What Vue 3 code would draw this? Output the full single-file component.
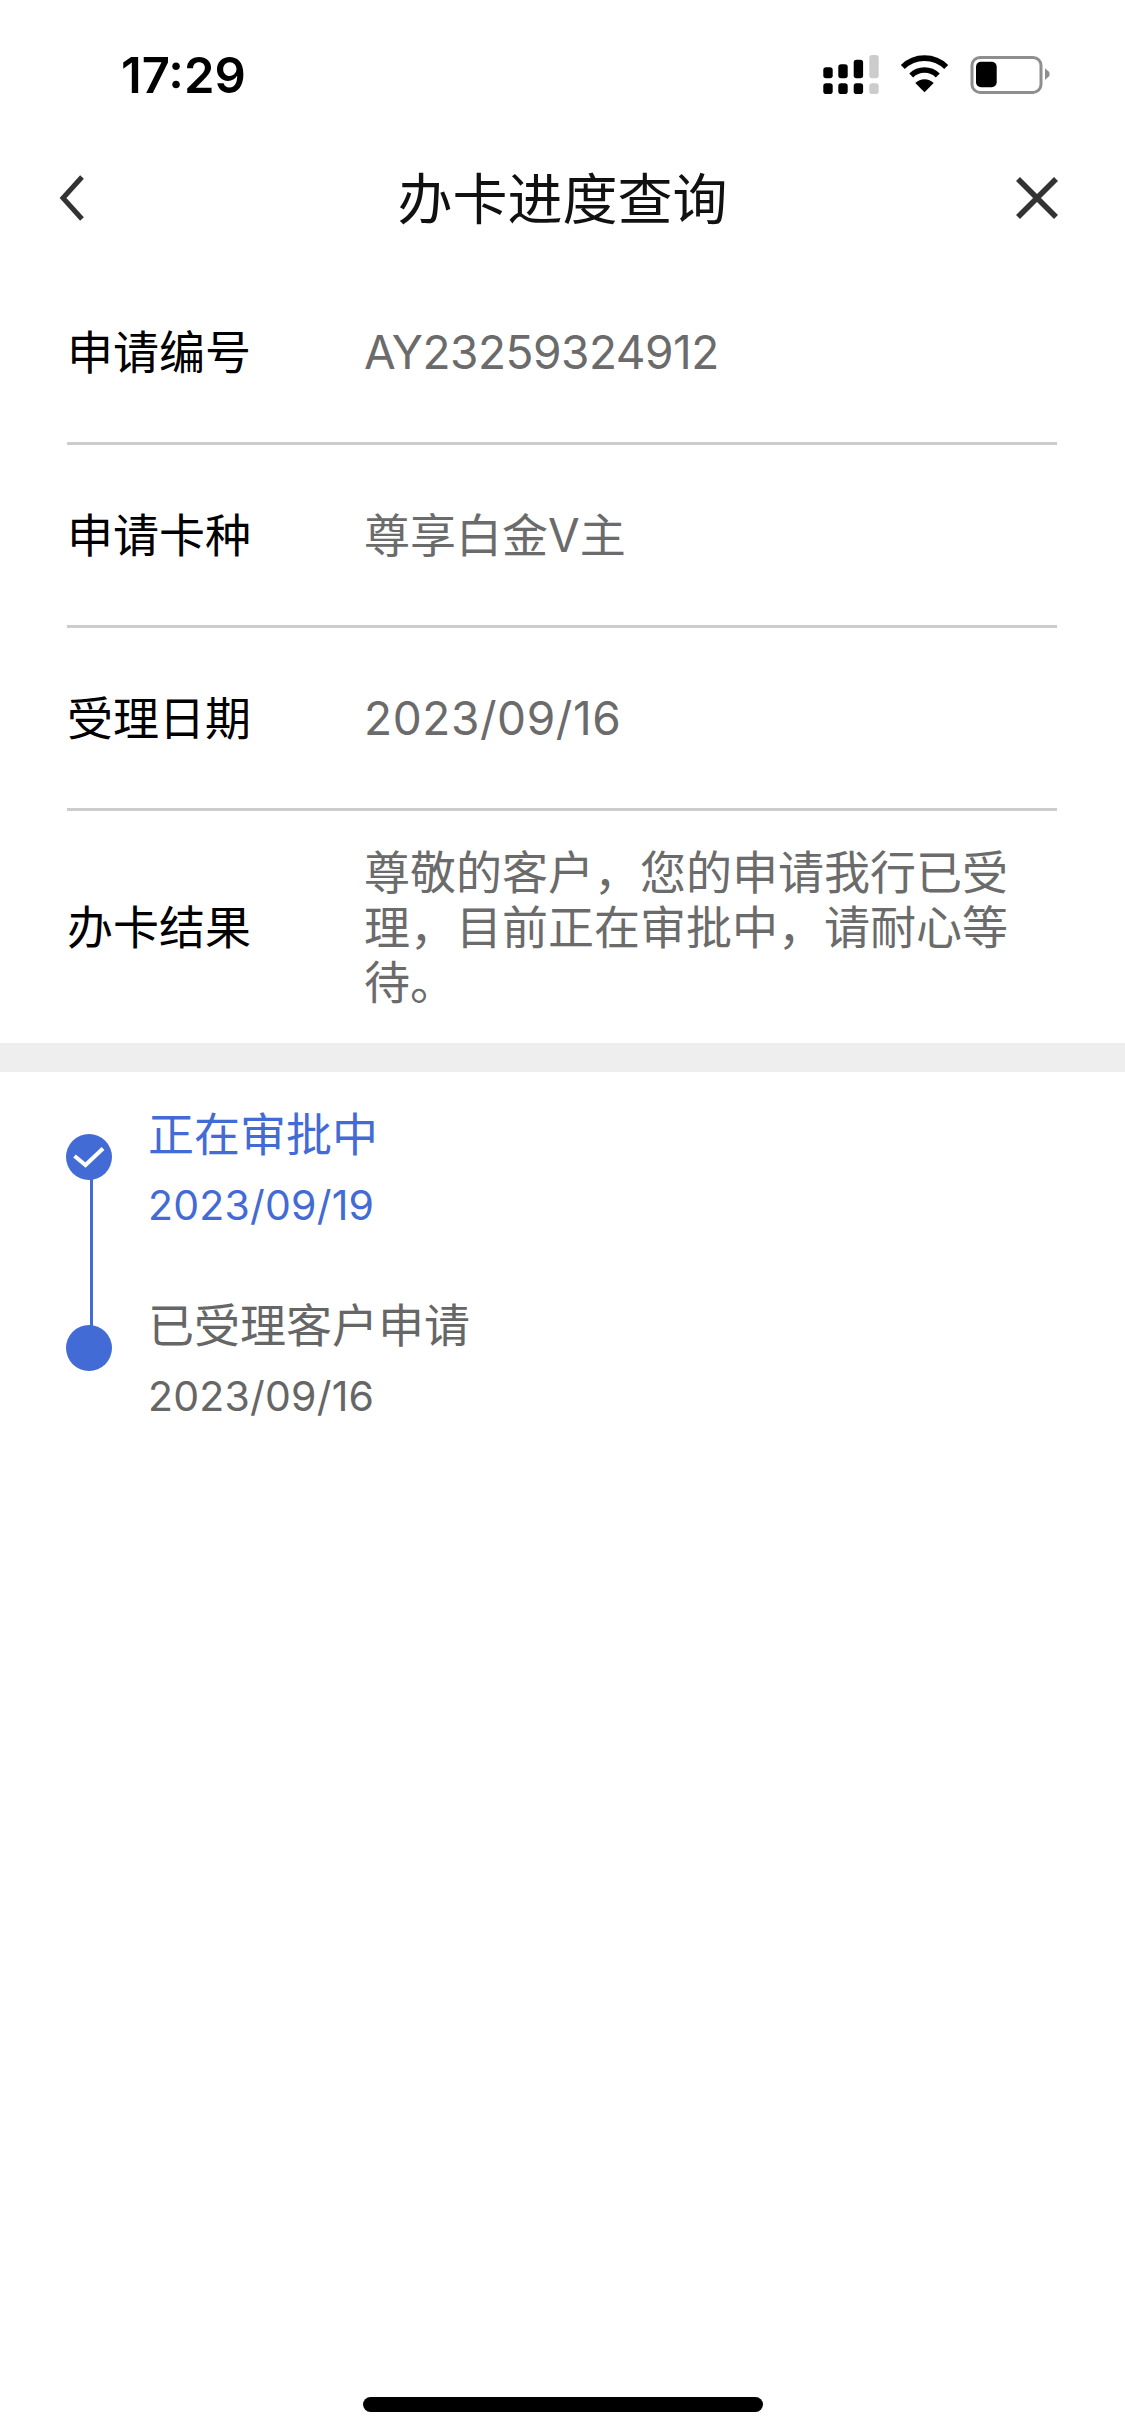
<script setup>
const rows = [
  { label: '申请编号', value: 'AY23259324912', cls: 'tight' },
  { label: '申请卡种', value: '尊享白金V主', cls: '' },
  { label: '受理日期', value: '2023/09/16', cls: 'wide' },
  { label: '办卡结果', value: '尊敬的客户，您的申请我行已受理，目前正在审批中，请耐心等待。', cls: '' },
]
const steps = [
  { title: '正在审批中', date: '2023/09/19', active: true },
  { title: '已受理客户申请', date: '2023/09/16', active: false },
]
</script>

<template>
  <div class="page">
    <div class="status">
      <span class="time">17:29</span>
      <svg class="status-icons" width="227" height="40" viewBox="43 25 227 40">
        <g fill="#000">
          <rect x="43.3" y="37.3" width="9.4" height="11" rx="2.8" />
          <rect x="58.3" y="34.3" width="9.4" height="14" rx="2.8" />
          <rect x="73.7" y="29.7" width="9.4" height="18.6" rx="2.8" />
          <rect x="43.3" y="53.3" width="9.4" height="10.7" rx="2.8" />
          <rect x="58.3" y="53.3" width="9.4" height="10.7" rx="2.8" />
          <rect x="73.7" y="53.3" width="9.4" height="10.7" rx="2.8" />
        </g>
        <g fill="#ccc">
          <rect x="89.3" y="25" width="9.4" height="23.3" rx="2.8" />
          <rect x="89.3" y="53.3" width="9.4" height="10.7" rx="2.8" />
        </g>
        <g fill="none" stroke="#000" stroke-width="5.6">
          <path d="M122.8 37 A31 31 0 0 1 166.2 37" />
          <path d="M131.2 45.4 A19 19 0 0 1 157.8 45.4" />
        </g>
        <path d="M144.5 62.3 L135.3 53 A13 13 0 0 1 153.7 53 Z" fill="#000" />
        <rect x="192" y="27.4" width="69" height="35" rx="8" fill="none" stroke="#8e8e8e" stroke-width="3" />
        <rect x="196" y="31.7" width="20.7" height="25.6" rx="5" fill="#000" />
        <path d="M265 38.3 L269.3 42 Q269.8 45 269.3 46 L265 50 Z" fill="#8e8e8e" />
      </svg>
    </div>

    <header class="nav">
      <svg class="nav-icon back" width="40" height="48" viewBox="0 0 40 48">
        <path d="M29 3 L10 24 L29 45" fill="none" stroke="#333" stroke-width="5" />
      </svg>
      <h1 class="title">办卡进度查询</h1>
      <svg class="nav-icon close" width="44" height="44" viewBox="0 0 44 44">
        <path d="M3 3 L41 41 M41 3 L3 41" fill="none" stroke="#333" stroke-width="5.6" />
      </svg>
    </header>

    <section class="info">
      <div v-for="row in rows" :key="row.label" class="row">
        <span class="label">{{ row.label }}</span>
        <span class="value" :class="row.cls">{{ row.value }}</span>
      </div>
    </section>

    <div class="band"></div>

    <section class="timeline">
      <div v-for="step in steps" :key="step.title" class="step" :class="{ active: step.active }">
        <div class="dot">
          <svg v-if="step.active" width="46" height="46" viewBox="0 0 46 46">
            <path d="M8.5 22 L19.5 31 L37 14.5" fill="none" stroke="#fff" stroke-width="4" />
          </svg>
        </div>
        <div class="step-text">
          <div class="step-title">{{ step.title }}</div>
          <div class="step-date">{{ step.date }}</div>
        </div>
      </div>
    </section>

    <div class="home"></div>
  </div>
</template>

<style scoped>
.page {
  display: flex;
  flex-direction: column;
  width: 1125px;
  height: 2435px;
  background: #fff;
  font-family: Inter, "Noto Sans CJK SC", sans-serif;
  overflow: hidden;
}
.status {
  display: flex;
  justify-content: space-between;
  align-items: center;
  height: 150px;
  padding: 0 75px 0 121px;
  box-sizing: border-box;
}
.time {
  font-size: 49px;
  font-weight: 600;
  color: #000;
}
.nav {
  display: grid;
  grid-template-columns: 1fr auto 1fr;
  align-items: center;
  height: 96px;
  padding: 0 66px;
}
.back {
  justify-self: start;
  margin-left: -13px;
}
.close {
  justify-self: end;
}
.title {
  margin: 0;
  padding-bottom: 6px;
  font-size: 55px;
  font-weight: 400;
  color: #111;
}
.info {
  padding: 16px 68px 0 67px;
}
.row {
  display: flex;
  align-items: center;
  height: 183px;
  box-sizing: border-box;
  border-bottom: 3px solid #ccc;
}
.row:last-child {
  height: 232px;
  border-bottom: none;
}
.label {
  flex: none;
  width: 297px;
  padding-bottom: 6px;
  font-size: 46px;
  color: #000;
}
.value {
  flex: 1;
  font-size: 46px;
  line-height: 55px;
  color: #6b6b6b;
  font-weight: 400;
}
.value.tight {
  letter-spacing: -0.5px;
}
.value.wide {
  letter-spacing: 0.6px;
}
.band {
  height: 29px;
  background: #eee;
}
.timeline {
  display: flex;
  flex-direction: column;
  gap: 67px;
  padding: 34px 0 0 66px;
}
.step {
  position: relative;
  display: flex;
  gap: 36px;
  color: #666;
}
.step.active {
  color: #436bd5;
}
.step.active::after {
  content: "";
  position: absolute;
  left: 24px;
  top: 73px;
  width: 3px;
  height: 147px;
  background: #436bd5;
}
.dot {
  flex: none;
  width: 46px;
  height: 46px;
  margin-top: 28px;
  border-radius: 50%;
  background: #436bd5;
}
.dot svg {
  display: block;
}
.step-title {
  font-size: 46px;
  line-height: 56px;
}
.step-date {
  margin-top: 18px;
  font-size: 41px;
  line-height: 50px;
  letter-spacing: 0.2px;
}
.home {
  width: 400px;
  height: 15px;
  margin: auto auto 23px;
  border-radius: 8px;
  background: #000;
}
</style>
